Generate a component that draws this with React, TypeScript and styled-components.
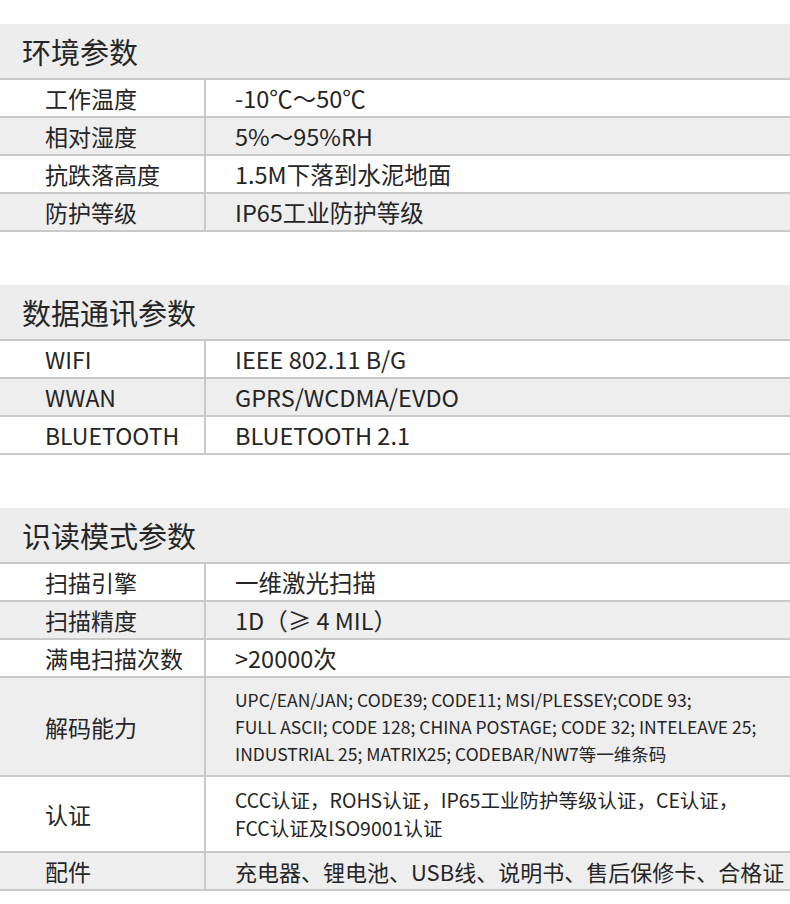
import React from "react"
import styled, { createGlobalStyle } from "styled-components"

const GlobalStyle = createGlobalStyle`
	html, body {
		margin: 0;
		padding: 0;
		background: #ffffff;
	}
	body {
		font-family: "Noto Sans CJK SC", "Noto Sans", sans-serif;
		color: #252525;
	}
`

const Page = styled.div`
	width: 790px;
	padding-top: 24px;
	display: flex;
	flex-direction: column;
	gap: 53px;
`

const Section = styled.section`
	display: flex;
	flex-direction: column;
`

const SectionTitle = styled.h2`
	margin: 0;
	height: 54px;
	padding-left: 22px;
	display: flex;
	align-items: center;
	background-color: #ededed;
	border-bottom: 2px solid #c9c9c9;
	font-size: 29px;
	font-weight: 400;
	color: #252525;
`

type RowProps = {
	$shaded?: boolean
	$height?: number
}
const Row = styled.div<RowProps>`
	display: flex;
	min-height: ${props => props.$height ?? 36}px;
	background-color: ${props => props.$shaded ? '#eeeeee' : '#ffffff'};
	border-bottom: 2px solid #c9c9c9;
`

const Label = styled.div`
	width: 159px;
	padding-left: 45px;
	border-right: 2px solid #c9c9c9;
	display: flex;
	align-items: center;
	font-size: 23px;
`

type ValueProps = {
	$size: number
	$lineHeight: number
}
const Value = styled.div<ValueProps>`
	flex: 1;
	padding-left: 29px;
	display: flex;
	align-items: center;
	font-size: ${props => props.$size}px;
	line-height: ${props => props.$lineHeight}px;
	white-space: nowrap;
`

const Lines = styled.p`
	margin: 0;
`

type Item = {
	label: string
	value: string[]
	height?: number
	size?: number
	lineHeight?: number
}

const sections: { title: string, items: Item[] }[] = [
	{
		title: '环境参数',
		items: [
			{ label: '工作温度', value: ['-10℃～50℃'] },
			{ label: '相对湿度', value: ['5%～95%RH'] },
			{ label: '抗跌落高度', value: ['1.5M下落到水泥地面'] },
			{ label: '防护等级', value: ['IP65工业防护等级'] },
		],
	},
	{
		title: '数据通讯参数',
		items: [
			{ label: 'WIFI', value: ['IEEE 802.11 B/G'] },
			{ label: 'WWAN', value: ['GPRS/WCDMA/EVDO'] },
			{ label: 'BLUETOOTH', value: ['BLUETOOTH 2.1'] },
		],
	},
	{
		title: '识读模式参数',
		items: [
			{ label: '扫描引擎', value: ['一维激光扫描'] },
			{ label: '扫描精度', value: ['1D（≥ 4 MIL）'] },
			{ label: '满电扫描次数', value: ['>20000次'] },
			{
				label: '解码能力',
				height: 97,
				size: 17.5,
				lineHeight: 27,
				value: [
					'UPC/EAN/JAN; CODE39; CODE11; MSI/PLESSEY;CODE 93;',
					'FULL ASCII; CODE 128; CHINA POSTAGE; CODE 32; INTELEAVE 25;',
					'INDUSTRIAL 25; MATRIX25; CODEBAR/NW7等一维条码',
				],
			},
			{
				label: '认证',
				height: 74,
				size: 19.5,
				lineHeight: 28,
				value: [
					'CCC认证，ROHS认证，IP65工业防护等级认证，CE认证，',
					'FCC认证及ISO9001认证',
				],
			},
			{ label: '配件', size: 22, value: ['充电器、锂电池、USB线、说明书、售后保修卡、合格证'] },
		],
	},
]

export default function App() {
	return <>
		<GlobalStyle />
		<Page>
			{sections.map(section => (
				<Section key={section.title}>
					<SectionTitle>{section.title}</SectionTitle>
					{section.items.map((item, i) => (
						<Row key={item.label} $shaded={i % 2 === 1} $height={item.height}>
							<Label>{item.label}</Label>
							<Value $size={item.size ?? 23.5} $lineHeight={item.lineHeight ?? 36}>
								<Lines>
									{item.value.map((line, j) => (
										<React.Fragment key={line}>
											{j > 0 && <br />}
											{line}
										</React.Fragment>
									))}
								</Lines>
							</Value>
						</Row>
					))}
				</Section>
			))}
		</Page>
	</>
}
